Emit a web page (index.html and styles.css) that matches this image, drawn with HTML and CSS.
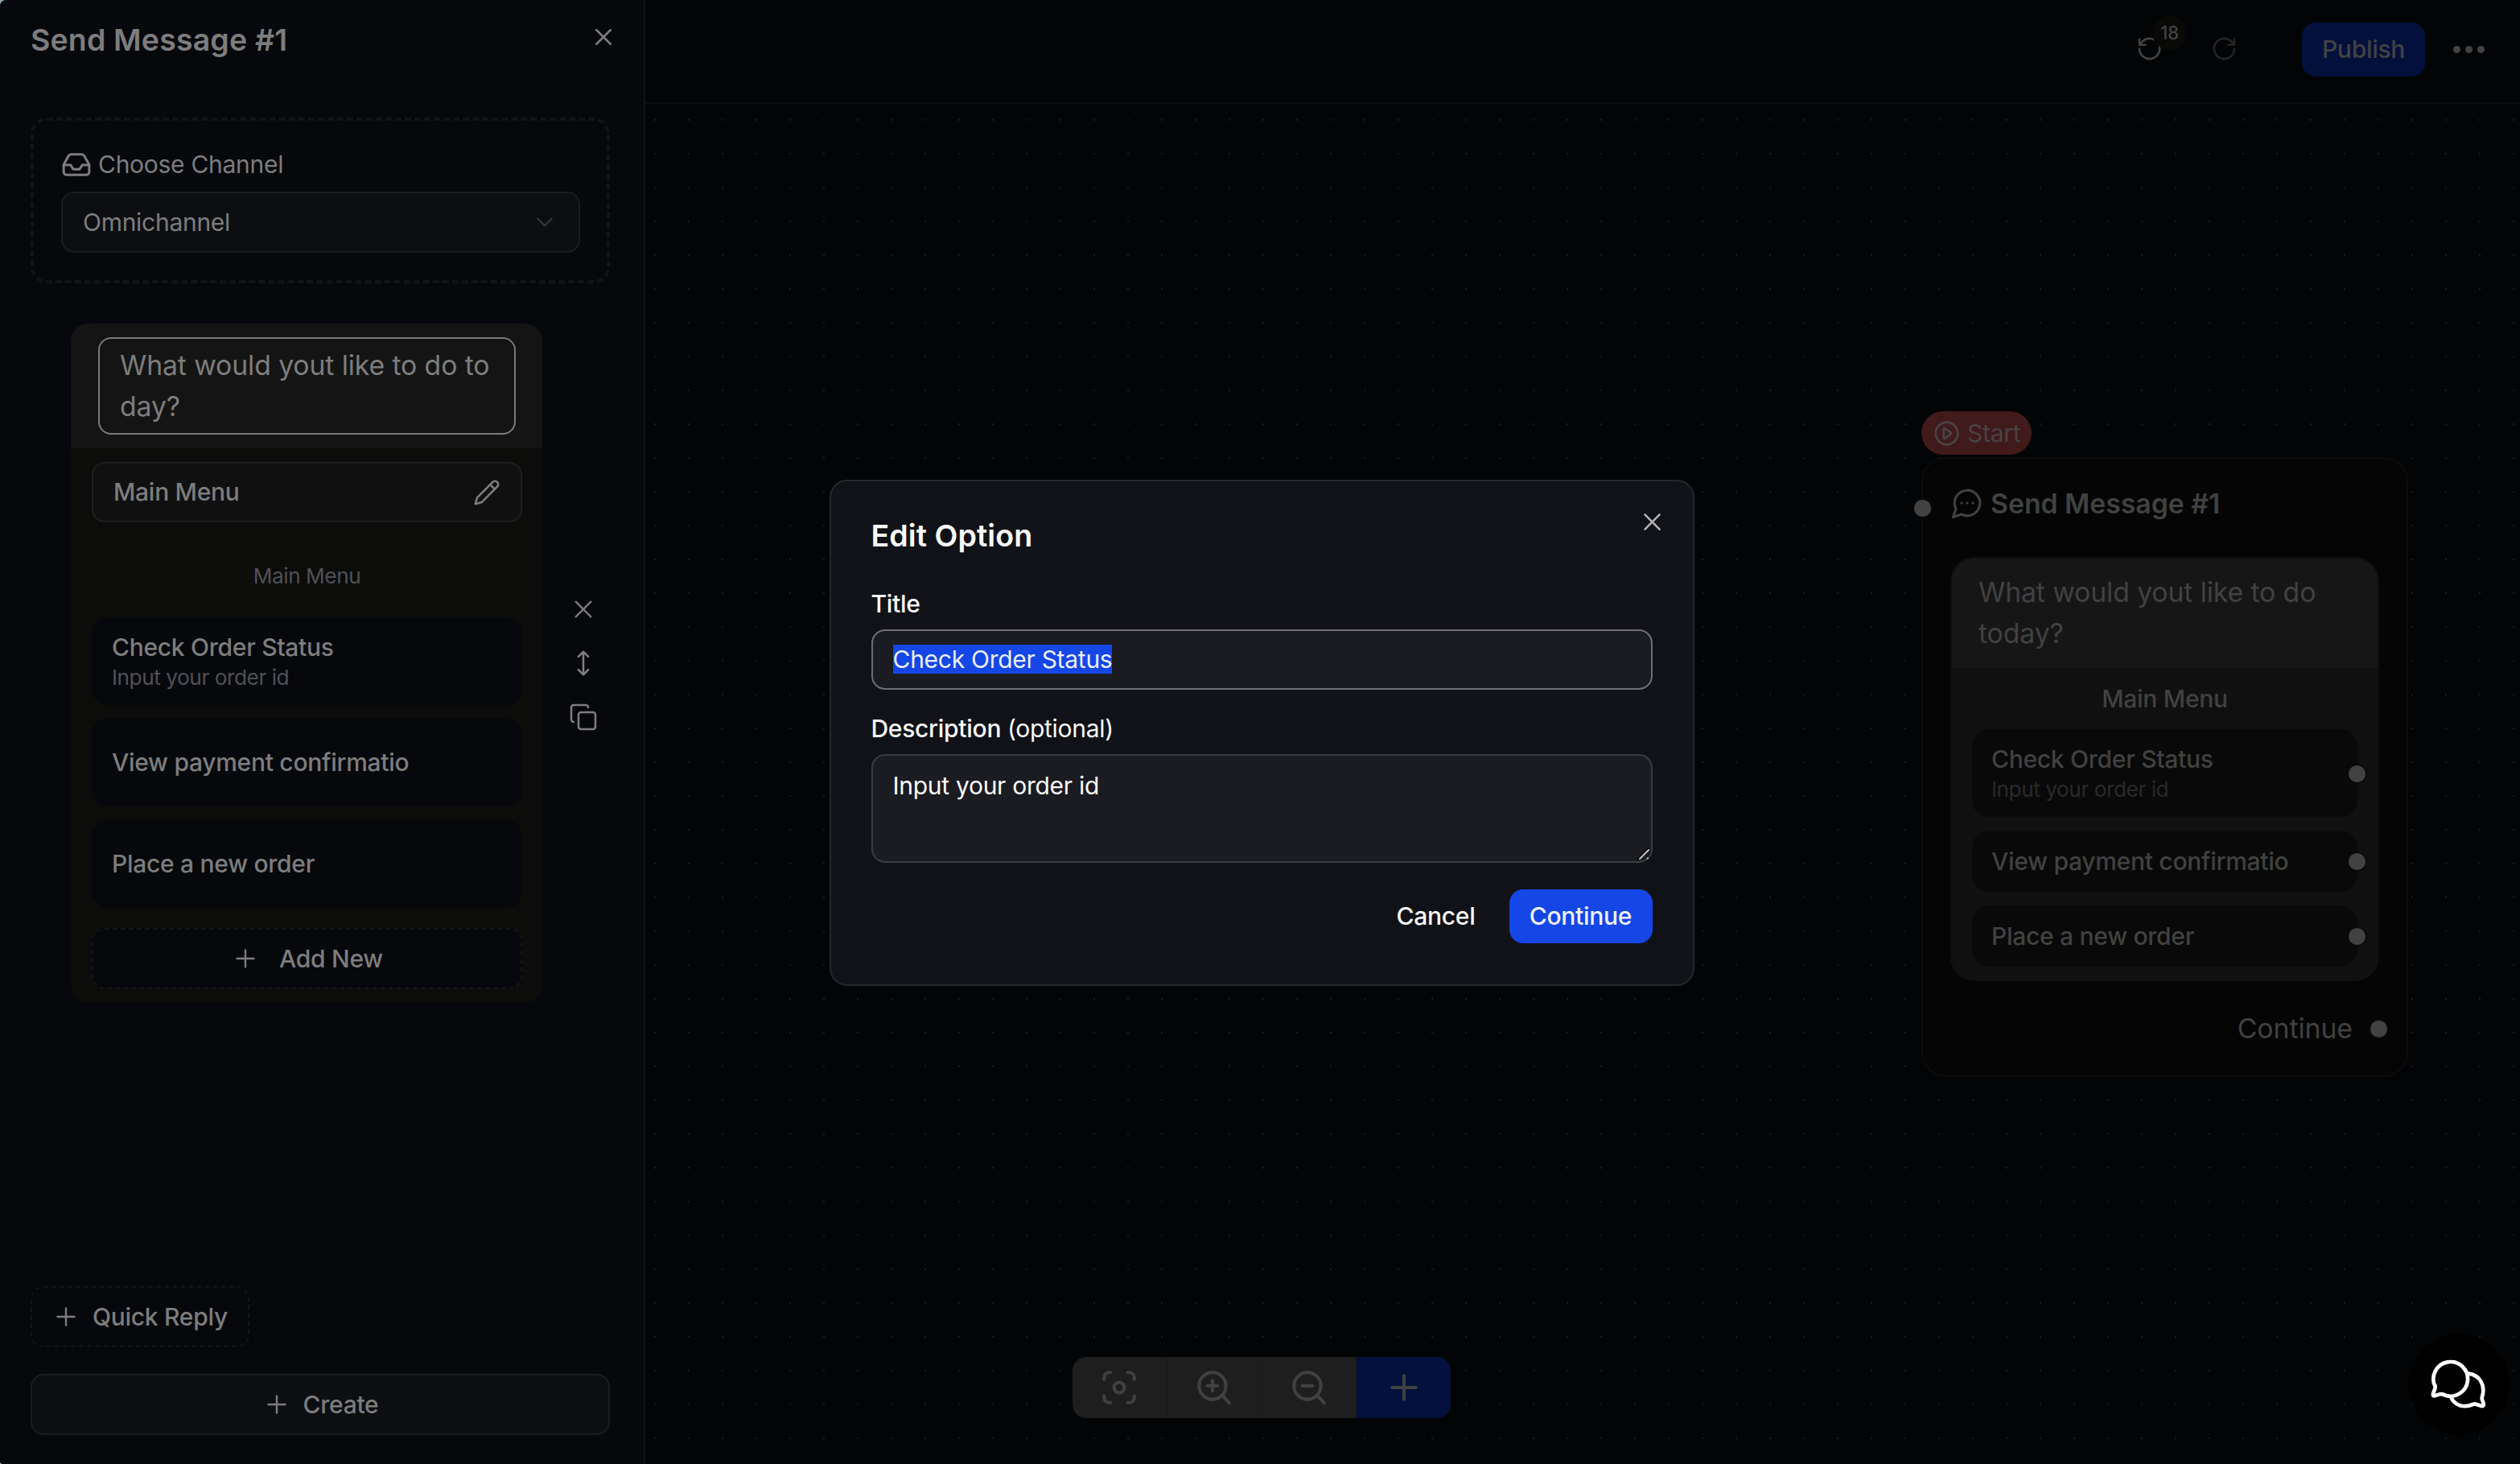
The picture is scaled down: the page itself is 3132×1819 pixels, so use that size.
FILE: index.html
```html
<!DOCTYPE html>
<html lang="en">
<head>
<meta charset="utf-8">
<title>Flow editor</title>
<link rel="stylesheet" href="styles.css">
</head>
<body>
<svg class="sprite" aria-hidden="true">
  <symbol id="i-x" viewBox="0 0 24 24"><path d="M5 5l14 14M19 5L5 19"/></symbol>
  <symbol id="i-plus" viewBox="0 0 24 24"><path d="M12 5v14M5 12h14"/></symbol>
  <symbol id="i-inbox" viewBox="0 0 24 24"><path d="M2.5 12.6h5.2l1.9 3.2h4.8l1.9-3.2h5.2"/><path d="M6.3 5.6L2.5 12.3v5.6a2 2 0 0 0 2 2h15a2 2 0 0 0 2-2v-5.6l-3.8-6.7a2 2 0 0 0-1.7-1H8a2 2 0 0 0-1.7 1z"/></symbol>
  <symbol id="i-chevron" viewBox="0 0 24 24"><path d="M5 8.5l7 7 7-7"/></symbol>
  <symbol id="i-pencil" viewBox="0 0 24 24"><path d="M17 3a2.85 2.83 0 1 1 4 4L7.5 20.5 2 22l1.5-5.5Z"/><path d="M15 5l4 4"/></symbol>
  <symbol id="i-updown" viewBox="0 0 24 24"><path d="M12 2.8v18.4M7.9 6.6L12 2.5l4.1 4.1M7.9 17.4l4.1 4.1 4.1-4.1"/></symbol>
  <symbol id="i-copy" viewBox="0 0 24 24"><rect x="8" y="8" width="14" height="14" rx="2"/><path d="M4 16c-1.1 0-2-.9-2-2V4c0-1.1.9-2 2-2h10c1.1 0 2 .9 2 2"/></symbol>
  <symbol id="i-undo" viewBox="0 0 30 30"><path d="M2 14.5a12.6 12.6 0 1 0 3.6-8.8L2.5 9.3M2 2.5v7.2h7.6"/></symbol>
  <symbol id="i-message" viewBox="0 0 24 24"><path d="M7.9 20A9 9 0 1 0 4 16.1L2 22Z"/><path d="M8 12h.01M12 12h.01M16 12h.01"/></symbol>
  <symbol id="i-play" viewBox="0 0 24 24"><circle cx="12" cy="12" r="10"/><path d="M9.2 8.2v7.6a.7.7 0 0 0 1.1.6l5.4-3.8a.7.7 0 0 0 0-1.2l-5.4-3.8a.7.7 0 0 0-1.1.6z"/></symbol>
  <symbol id="i-focus" viewBox="0 0 24 24"><circle cx="12" cy="12" r="3.1"/><path d="M6.9 3H6a3 3 0 0 0-3 3v1.1M17.1 3h.9a3 3 0 0 1 3 3v1.1M3 17v1a3 3 0 0 0 3 3h.9M21 17v1a3 3 0 0 1-3 3h-.9"/></symbol>
  <symbol id="i-zoomin" viewBox="0 0 24 24"><circle cx="11" cy="11" r="8"/><path d="M21 21.2l-4.2-4.6M11 8v6M8 11h6"/></symbol>
  <symbol id="i-zoomout" viewBox="0 0 24 24"><circle cx="11" cy="11" r="8"/><path d="M21 21.2l-4.2-4.6M8 11h6"/></symbol>
</svg>

<div class="app">
  <aside class="panel">
    <header class="panel-head">
      <h2 class="panel-title">Send Message #1</h2>
      <svg class="icon close"><use href="#i-x"/></svg>
    </header>

    <section class="channel">
      <div class="channel-label"><svg class="icon inbox"><use href="#i-inbox"/></svg>Choose Channel</div>
      <div class="select"><span>Omnichannel</span><svg class="icon chevron"><use href="#i-chevron"/></svg></div>
    </section>

    <div class="message-row">
      <section class="card">
        <div class="card-head">
          <div class="prompt">What would yout like to do to<br>day?</div>
        </div>
        <div class="card-body">
          <div class="menu-button"><span>Main Menu</span><svg class="icon pencil"><use href="#i-pencil"/></svg></div>
          <div class="menu-caption">Main Menu</div>
          <div class="options">
            <div class="option option-detailed"><span>Check Order Status</span><small>Input your order id</small></div>
            <div class="option"><span>View payment confirmatio</span></div>
            <div class="option"><span>Place a new order</span></div>
          </div>
          <div class="add-new"><svg class="icon plus"><use href="#i-plus"/></svg>Add New</div>
        </div>
      </section>
      <div class="card-tools">
        <svg class="icon tool-x"><use href="#i-x"/></svg>
        <svg class="icon tool-move"><use href="#i-updown"/></svg>
        <svg class="icon tool-copy"><use href="#i-copy"/></svg>
      </div>
    </div>

    <footer class="panel-foot">
      <div class="quick-reply"><svg class="icon plus"><use href="#i-plus"/></svg>Quick Reply</div>
      <div class="create"><svg class="icon plus"><use href="#i-plus"/></svg>Create</div>
    </footer>
  </aside>

  <main class="workspace">
    <header class="topbar">
      <div class="undo"><svg class="icon history"><use href="#i-undo"/></svg><span class="badge">18</span></div>
      <svg class="icon history redo"><use href="#i-undo"/></svg>
      <div class="publish">Publish</div>
      <div class="more"><i></i><i></i><i></i></div>
    </header>
    <div class="canvas"></div>
  </main>

  <div class="start"><svg class="icon play"><use href="#i-play"/></svg>Start</div>
  <article class="node">
    <i class="handle handle-in"></i>
    <header class="node-head"><svg class="icon message"><use href="#i-message"/></svg>Send Message #1</header>
    <div class="node-card">
      <div class="node-prompt">What would yout like to do<br>today?</div>
      <div class="node-menu">Main Menu</div>
      <div class="node-options">
        <div class="node-option node-option-detailed"><span>Check Order Status</span><small>Input your order id</small><i class="handle handle-out"></i></div>
        <div class="node-option"><span>View payment confirmatio</span><i class="handle handle-out"></i></div>
        <div class="node-option"><span>Place a new order</span><i class="handle handle-out"></i></div>
      </div>
    </div>
    <footer class="node-foot">Continue<i class="handle handle-next"></i></footer>
  </article>

  <div class="controls">
    <div class="control"><svg class="icon"><use href="#i-focus"/></svg></div>
    <div class="control"><svg class="icon"><use href="#i-zoomin"/></svg></div>
    <div class="control"><svg class="icon"><use href="#i-zoomout"/></svg></div>
    <div class="control control-add"><svg class="icon"><use href="#i-plus"/></svg></div>
  </div>

  <div class="chat">
    <svg class="chat-icon" viewBox="0 0 210 200">
      <path d="M20 105A64 64 0 1 1 52 135Q46 131 38 133L17 139Q10 140 12 131L19 112Q21 106 19 100"/>
      <path d="M144 56C190 62 207 104 195 142Q193 148 195 153L200 168Q202 178 193 177L172 170Q166 168 160 171C128 185 91 176 78 142"/>
    </svg>
  </div>

  <div class="overlay">
    <div class="modal">
      <svg class="icon modal-close"><use href="#i-x"/></svg>
      <h1 class="modal-title">Edit Option</h1>
      <div class="field-label">Title</div>
      <div class="field field-active"><span class="selected">Check Order Status</span></div>
      <div class="field-label field-label-second">Description <span class="optional">(optional)</span></div>
      <div class="field field-area">Input your order id
        <svg class="grip" viewBox="0 0 16 16"><path class="grip-shade" d="M1 14L14 1"/><path d="M3 14L14 3M12.6 13.5h.4"/></svg>
      </div>
      <div class="actions">
        <div class="cancel">Cancel</div>
        <div class="confirm">Continue</div>
      </div>
    </div>
  </div>
</div>
</body>
</html>
```
FILE: styles.css
```css
* { box-sizing: border-box; }

html { background: #8fa3b0; }

body {
  margin: 0;
  font-family: "Inter", "Liberation Sans", sans-serif;
  font-size: 30px;
  line-height: 45px;
  letter-spacing: -0.28px;
}

h1, h2 { margin: 0; }

.sprite { position: absolute; width: 0; height: 0; }

.icon {
  flex: none;
  display: block;
  fill: none;
  stroke: currentColor;
  stroke-width: 2;
  stroke-linecap: round;
  stroke-linejoin: round;
}

.app {
  position: relative;
  display: flex;
  width: 3132px;
  height: 1819px;
  overflow: hidden;
  border-radius: 8px 0 0 4px;
  background: #030406;
}

/* Side panel */
.panel {
  display: flex;
  flex-direction: column;
  width: 802px;
  height: 1819px;
  padding: 0 42px 36px 38px;
  border-right: 2px solid #121316;
  background: #07080c;
  color: #7d7d7d;
}

.panel-head {
  display: flex;
  justify-content: space-between;
  height: 146px;
}

.panel-title {
  font-size: 37.5px;
  font-weight: 600;
  line-height: 100px;
  letter-spacing: 0.15px;
}

.close {
  width: 30px;
  height: 30px;
  margin: 31px -7px 0 0;
}

.channel {
  height: 206px;
  padding: 34px 33px 34px 34px;
  border: 4px dashed #121317;
  border-radius: 20px;
}

.channel-label {
  display: flex;
  align-items: center;
  gap: 7px;
  height: 40px;
  margin: 0 0 14px -1px;
}

.inbox { width: 40px; height: 40px; stroke-width: 1.8; }

.select {
  display: flex;
  align-items: center;
  justify-content: space-between;
  height: 76px;
  padding: 0 27px 0 25px;
  border: 2px solid #1b1c20;
  border-radius: 16px;
  background: #0d0e12;
}

.chevron { width: 30px; height: 30px; color: #333438; stroke-width: 1.8; }

.message-row {
  display: flex;
  gap: 35px;
  margin: 50px 0 0 50px;
}

.card {
  width: 586px;
  overflow: hidden;
  border-radius: 22px;
  background: #0c0c0b;
}

.card-head {
  height: 155px;
  padding: 17px 33px 0 34px;
  background: #141414;
}

.prompt {
  height: 121px;
  padding: 8px 0 0 25px;
  border: 2px solid #7a7a7a;
  border-radius: 16px;
  font-size: 33.75px;
  line-height: 50.6px;
  letter-spacing: -0.1px;
  white-space: nowrap;
}

.card-body { padding: 17px 25px 17px 26px; }

.menu-button {
  display: flex;
  align-items: center;
  justify-content: space-between;
  height: 75px;
  padding: 0 25px 0 25px;
  border: 2px solid #1e1e1f;
  border-radius: 16px;
  background: #101010;
  font-weight: 500;
}

.pencil { width: 34px; height: 34px; stroke-width: 1.8; }

.menu-caption {
  margin: 47px 0 31px;
  color: #505055;
  font-size: 26.25px;
  line-height: 40px;
  letter-spacing: -0.47px;
  text-align: center;
}

.options { display: flex; flex-direction: column; gap: 17px; }

.option {
  display: flex;
  flex-direction: column;
  justify-content: center;
  height: 109px;
  padding-left: 25px;
  border-radius: 20px;
  background: #07080c;
  font-weight: 500;
}

.option-detailed { padding-bottom: 5px; }

.option small {
  color: #505055;
  font-size: 26.25px;
  font-weight: 400;
  line-height: 30px;
  letter-spacing: -0.47px;
}

.add-new {
  display: flex;
  align-items: center;
  justify-content: center;
  gap: 24px;
  height: 76px;
  margin-top: 25px;
  border: 2px dashed #131418;
  border-radius: 16px;
  background: #07080c;
  font-weight: 500;
}

.plus { width: 36px; height: 36px; stroke-width: 1.6; }

.card-tools {
  display: flex;
  flex-direction: column;
  align-items: center;
  gap: 31px;
  width: 32px;
  padding-top: 337px;
}

.card-tools .icon { width: 36px; height: 36px; stroke-width: 1.7; }
.card-tools .tool-x { width: 32px; height: 32px; margin: 2px; }

.panel-foot {
  display: flex;
  flex-direction: column;
  align-items: flex-start;
  gap: 33px;
  margin-top: auto;
}

.quick-reply,
.create {
  display: flex;
  align-items: center;
  gap: 15px;
  height: 76px;
  border-radius: 16px;
  font-weight: 500;
}

.quick-reply {
  width: 272px;
  padding-left: 24px;
  border: 2px dashed #131418;
  white-space: nowrap;
}

.create {
  justify-content: center;
  width: 100%;
  border: 2px solid #1b1c20;
  background: #0d0e12;
}

/* Canvas and top bar */
.workspace {
  display: flex;
  flex: 1;
  flex-direction: column;
}

.topbar {
  display: flex;
  align-items: center;
  justify-content: flex-end;
  height: 129px;
  padding: 0 44px 5px 0;
  border-bottom: 2px solid #0b0c0e;
  color: #424242;
}

.undo { position: relative; margin-right: 62px; }

.history { width: 30px; height: 30px; stroke-width: 2.6; }

.redo {
  margin-right: 82px;
  color: #242425;
  transform: scaleX(-1);
}

.badge {
  position: absolute;
  top: -27px;
  left: 18px;
  width: 43px;
  height: 43px;
  border-radius: 50%;
  background: #090908;
  font-size: 22.5px;
  font-weight: 500;
  line-height: 43px;
  text-align: center;
}

.publish {
  width: 153px;
  height: 67px;
  margin-right: 35px;
  border-radius: 17px;
  background: #04103c;
  font-weight: 500;
  line-height: 67px;
  text-align: center;
}

.more { display: flex; gap: 6px; }

.more i {
  width: 9px;
  height: 9px;
  border-radius: 50%;
  background: #424242;
}

.canvas {
  flex: 1;
  background-image: conic-gradient(from 0deg at 2px 2px, transparent 75%, #1b1c1e 0);
  background-position: 11px 19px;
  background-size: 42px 42px;
}

/* Flow node */
.start {
  position: absolute;
  top: 511px;
  left: 2388px;
  display: flex;
  align-items: center;
  gap: 9px;
  width: 137px;
  height: 54px;
  padding-left: 15px;
  border-radius: 27px;
  background: #411a1c;
  color: #484344;
}

.play { width: 33px; height: 33px; stroke-width: 2; }

.node {
  position: absolute;
  top: 568px;
  left: 2388px;
  width: 605px;
  height: 770px;
  padding: 25px 34px 0;
  border: 2px solid #0c0c0c;
  border-radius: 30px;
  background: #050505;
  color: #414141;
}

.handle {
  position: absolute;
  width: 25px;
  height: 25px;
  border: 2px solid #0a0a0a;
  border-radius: 50%;
  background: #424242;
}

.handle-in { top: 49px; left: -13px; }
.handle-out { top: calc(50% - 12px); right: -12px; }
.handle-next { top: calc(50% - 12px); right: -12px; }

.node-head {
  display: flex;
  align-items: center;
  gap: 8px;
  height: 60px;
  margin-bottom: 37px;
  font-size: 33.75px;
  font-weight: 600;
  letter-spacing: 0;
}

.message { width: 42px; height: 42px; stroke-width: 1.8; }

.node-card {
  height: 527px;
  overflow: hidden;
  border: 2px solid #0f0f0f;
  border-radius: 30px;
  background: #101010;
}

.node-prompt {
  height: 136px;
  padding: 17px 0 0 33px;
  background: #161616;
  font-size: 33.75px;
  line-height: 50.6px;
  letter-spacing: -0.1px;
}

.node-menu {
  font-weight: 500;
  line-height: 76px;
  text-align: center;
}

.node-options {
  display: flex;
  flex-direction: column;
  gap: 17px;
  padding: 0 25px;
}

.node-option {
  position: relative;
  display: flex;
  flex-direction: column;
  justify-content: center;
  height: 76px;
  padding-left: 24px;
  border-radius: 21px;
  background: #090909;
  font-weight: 500;
}

.node-option-detailed { height: 109px; padding-bottom: 5px; }

.node-option small {
  color: #28282b;
  font-size: 26.25px;
  font-weight: 400;
  line-height: 30px;
  letter-spacing: -0.47px;
}

.node-foot {
  position: relative;
  height: 117px;
  padding-right: 33px;
  font-size: 33.75px;
  line-height: 118px;
  letter-spacing: -0.05px;
  text-align: right;
}

/* Zoom controls */
.controls {
  position: absolute;
  top: 1686px;
  left: 1333px;
  display: flex;
  width: 470px;
  height: 76px;
  overflow: hidden;
  border-radius: 17px;
  background: #1e1e1e;
  color: #404040;
}

.control {
  display: flex;
  flex: 1;
  align-items: center;
  justify-content: center;
  border-right: 1px solid #191919;
}

.control .icon { width: 50px; height: 50px; }

.control-add { border: 0; background: #04103c; }

.chat {
  position: absolute;
  top: 1657px;
  left: 2993px;
  display: flex;
  width: 126px;
  height: 126px;
  border-radius: 50%;
  background: #000;
}

.chat-icon {
  width: 70px;
  height: 66.7px;
  margin: 31px 0 0 27px;
  fill: none;
  stroke: #fff;
  stroke-width: 14;
  stroke-linecap: round;
  stroke-linejoin: round;
}

/* Dialog */
.overlay {
  position: absolute;
  inset: 0;
  display: flex;
  align-items: center;
  justify-content: center;
  padding: 2px 0 0 4px;
}

.modal {
  position: relative;
  width: 1075px;
  height: 629px;
  padding: 48px 50px 0;
  border: 2px solid #26272b;
  border-radius: 22px;
  background: #111217;
  color: #fafafa;
}

.modal-close {
  position: absolute;
  top: 35px;
  right: 35px;
  width: 31px;
  height: 31px;
  color: #b4b4b6;
}

.modal-title {
  margin-bottom: 49px;
  font-size: 37.5px;
  font-weight: 600;
  line-height: 40px;
  letter-spacing: 0.1px;
}

.field-label {
  margin-bottom: 17px;
  font-weight: 500;
  line-height: 30px;
}

.field-label-second { margin-top: 33px; }

.optional { font-weight: 400; }

.field {
  position: relative;
  height: 75px;
  padding: 13px 25px;
  border: 2px solid #3a3b3f;
  border-radius: 17px;
  background: #1b1c21;
}

.field-active { border-color: #6f6f72; }

.selected {
  display: inline-block;
  line-height: 36px;
  background: #1546e6;
  color: #e9eefc;
}

.field-area { height: 135px; padding-top: 15px; }

.grip {
  position: absolute;
  right: 1px;
  bottom: 1px;
  width: 16px;
  height: 16px;
  fill: none;
  stroke: #c4c4c4;
  stroke-width: 2;
  stroke-linecap: round;
}

.grip-shade { stroke: #000; stroke-width: 2; }

.actions {
  display: flex;
  align-items: center;
  justify-content: flex-end;
  gap: 42px;
  margin-top: 33px;
  font-weight: 500;
  line-height: 67px;
}

.confirm {
  width: 178px;
  border-radius: 17px;
  background: #1546e6;
  color: #eef2fd;
  text-align: center;
}
```
